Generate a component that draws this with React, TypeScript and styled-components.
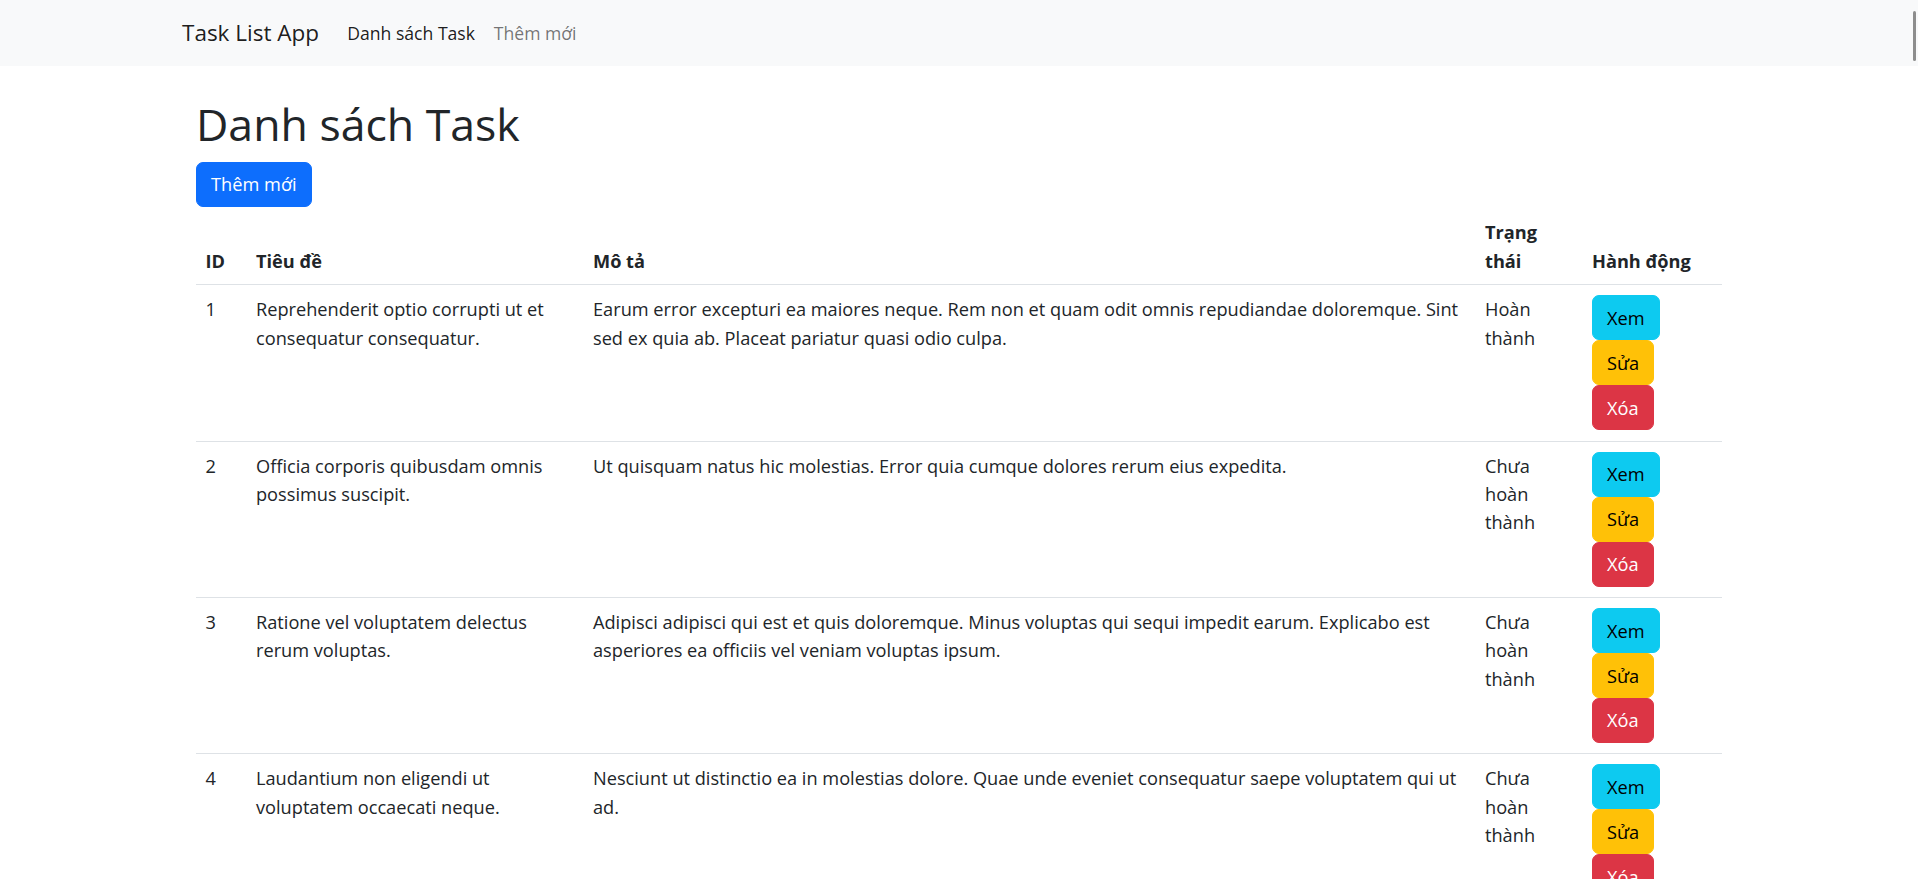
import { FC } from 'react'
import styled, { createGlobalStyle } from 'styled-components'

type Variant = 'info' | 'warning' | 'danger' | 'primary'

interface Task {
  id: number
  title: string
  description: string
  done: boolean
}

const tasks: Task[] = [
  {
    id: 1,
    title: 'Reprehenderit optio corrupti ut et consequatur consequatur.',
    description:
      'Earum error excepturi ea maiores neque. Rem non et quam odit omnis repudiandae doloremque. Sint sed ex quia ab. Placeat pariatur quasi odio culpa.',
    done: true,
  },
  {
    id: 2,
    title: 'Officia corporis quibusdam omnis possimus suscipit.',
    description: 'Ut quisquam natus hic molestias. Error quia cumque dolores rerum eius expedita.',
    done: false,
  },
  {
    id: 3,
    title: 'Ratione vel voluptatem delectus rerum voluptas.',
    description:
      'Adipisci adipisci qui est et quis doloremque. Minus voluptas qui sequi impedit earum. Explicabo est asperiores ea officiis vel veniam voluptas ipsum.',
    done: false,
  },
  {
    id: 4,
    title: 'Laudantium non eligendi ut voluptatem occaecati neque.',
    description:
      'Nesciunt ut distinctio ea in molestias dolore. Quae unde eveniet consequatur saepe voluptatem qui ut ad.',
    done: false,
  },
  {
    id: 5,
    title: 'Quia dolorem sit molestiae aut.',
    description: 'Voluptas est et aut ratione. Sed eum non quos facere consequatur.',
    done: true,
  },
]

const GlobalStyle = createGlobalStyle`
  html {
    scrollbar-width: none;
  }
  html::-webkit-scrollbar {
    display: none;
  }
  body {
    margin: 0;
    background: #fff;
    color: #212529;
    font-family: 'Open Sans', 'Noto Sans', sans-serif;
    font-size: 18.2px;
    line-height: 28.2px;
  }
  * {
    box-sizing: border-box;
  }
`

const Navbar = styled.nav`
  background: #f8f9fa;
  padding: 9.4px 0;
`
const NavInner = styled.div`
  width: 1554px;
  margin: 0 auto;
  display: flex;
  align-items: center;
`
const Brand = styled.a`
  font-size: 22.5px;
  line-height: 35.25px;
  padding: 5.9px 0;
  margin-right: 18.8px;
  color: rgba(0, 0, 0, 0.9);
  text-decoration: none;
`
const NavLink = styled.a<{ $active?: boolean }>`
  padding: 9.4px;
  font-size: 17.6px;
  color: ${p => (p.$active ? 'rgba(0, 0, 0, 0.9)' : 'rgba(0, 0, 0, 0.55)')};
  text-decoration: none;
`

const Container = styled.main`
  width: 1554px;
  margin: 0 auto;
  padding: 30px 14px 0;
`
const Title = styled.h1`
  margin: 0 0 9.4px;
  font-size: 44.6px;
  font-weight: 400;
  line-height: 56.4px;
`

const colors: Record<Variant, { bg: string; fg: string }> = {
  primary: { bg: '#0d6efd', fg: '#fff' },
  info: { bg: '#0dcaf0', fg: '#000' },
  warning: { bg: '#ffc107', fg: '#000' },
  danger: { bg: '#dc3545', fg: '#fff' },
}

const Button = styled.button<{ $variant: Variant }>`
  display: inline-block;
  font: inherit;
  line-height: 28.2px;
  padding: 7.4px 14.1px;
  border: 1px solid ${p => colors[p.$variant].bg};
  border-radius: 7px;
  background: ${p => colors[p.$variant].bg};
  color: ${p => colors[p.$variant].fg};
  cursor: pointer;
`

const Table = styled.table`
  width: 100%;
  margin-top: 2.5px;
  table-layout: fixed;
  border-collapse: collapse;
`
const Th = styled.th`
  padding: 9.4px;
  text-align: left;
  vertical-align: bottom;
  font-weight: 700;
  border-bottom: 1px solid #dee2e6;
`
const Td = styled.td`
  padding: 10.2px 9.4px;
  vertical-align: top;
  border-bottom: 1px solid #dee2e6;
`
const Actions = styled.div`
  display: flex;
  flex-direction: column;
  align-items: flex-start;
`

const ScrollThumb = styled.div`
  position: fixed;
  top: 11px;
  right: 2px;
  width: 3px;
  height: 50px;
  border-radius: 2px;
  background: #8d8d8d;
`

const App: FC = () => {
  return (
    <>
      <GlobalStyle />
      <Navbar>
        <NavInner>
          <Brand href="#">Task List App</Brand>
          <NavLink href="#" $active>
            Danh sách Task
          </NavLink>
          <NavLink href="#">Thêm mới</NavLink>
        </NavInner>
      </Navbar>

      <Container>
        <Title>Danh sách Task</Title>
        <Button $variant="primary">Thêm mới</Button>

        <Table>
          <colgroup>
            <col style={{ width: 50.6 }} />
            <col style={{ width: 337 }} />
            <col style={{ width: 892 }} />
            <col style={{ width: 107 }} />
            <col />
          </colgroup>
          <thead>
            <tr>
              <Th>ID</Th>
              <Th>Tiêu đề</Th>
              <Th>Mô tả</Th>
              <Th>Trạng thái</Th>
              <Th>Hành động</Th>
            </tr>
          </thead>
          <tbody>
            {tasks.map(task => (
              <tr key={task.id}>
                <Td>{task.id}</Td>
                <Td>{task.title}</Td>
                <Td>{task.description}</Td>
                <Td>{task.done ? 'Hoàn thành' : 'Chưa hoàn thành'}</Td>
                <Td>
                  <Actions>
                    <Button $variant="info">Xem</Button>
                    <Button $variant="warning">Sửa</Button>
                    <Button $variant="danger">Xóa</Button>
                  </Actions>
                </Td>
              </tr>
            ))}
          </tbody>
        </Table>
      </Container>
      <ScrollThumb />
    </>
  )
}

export default App
